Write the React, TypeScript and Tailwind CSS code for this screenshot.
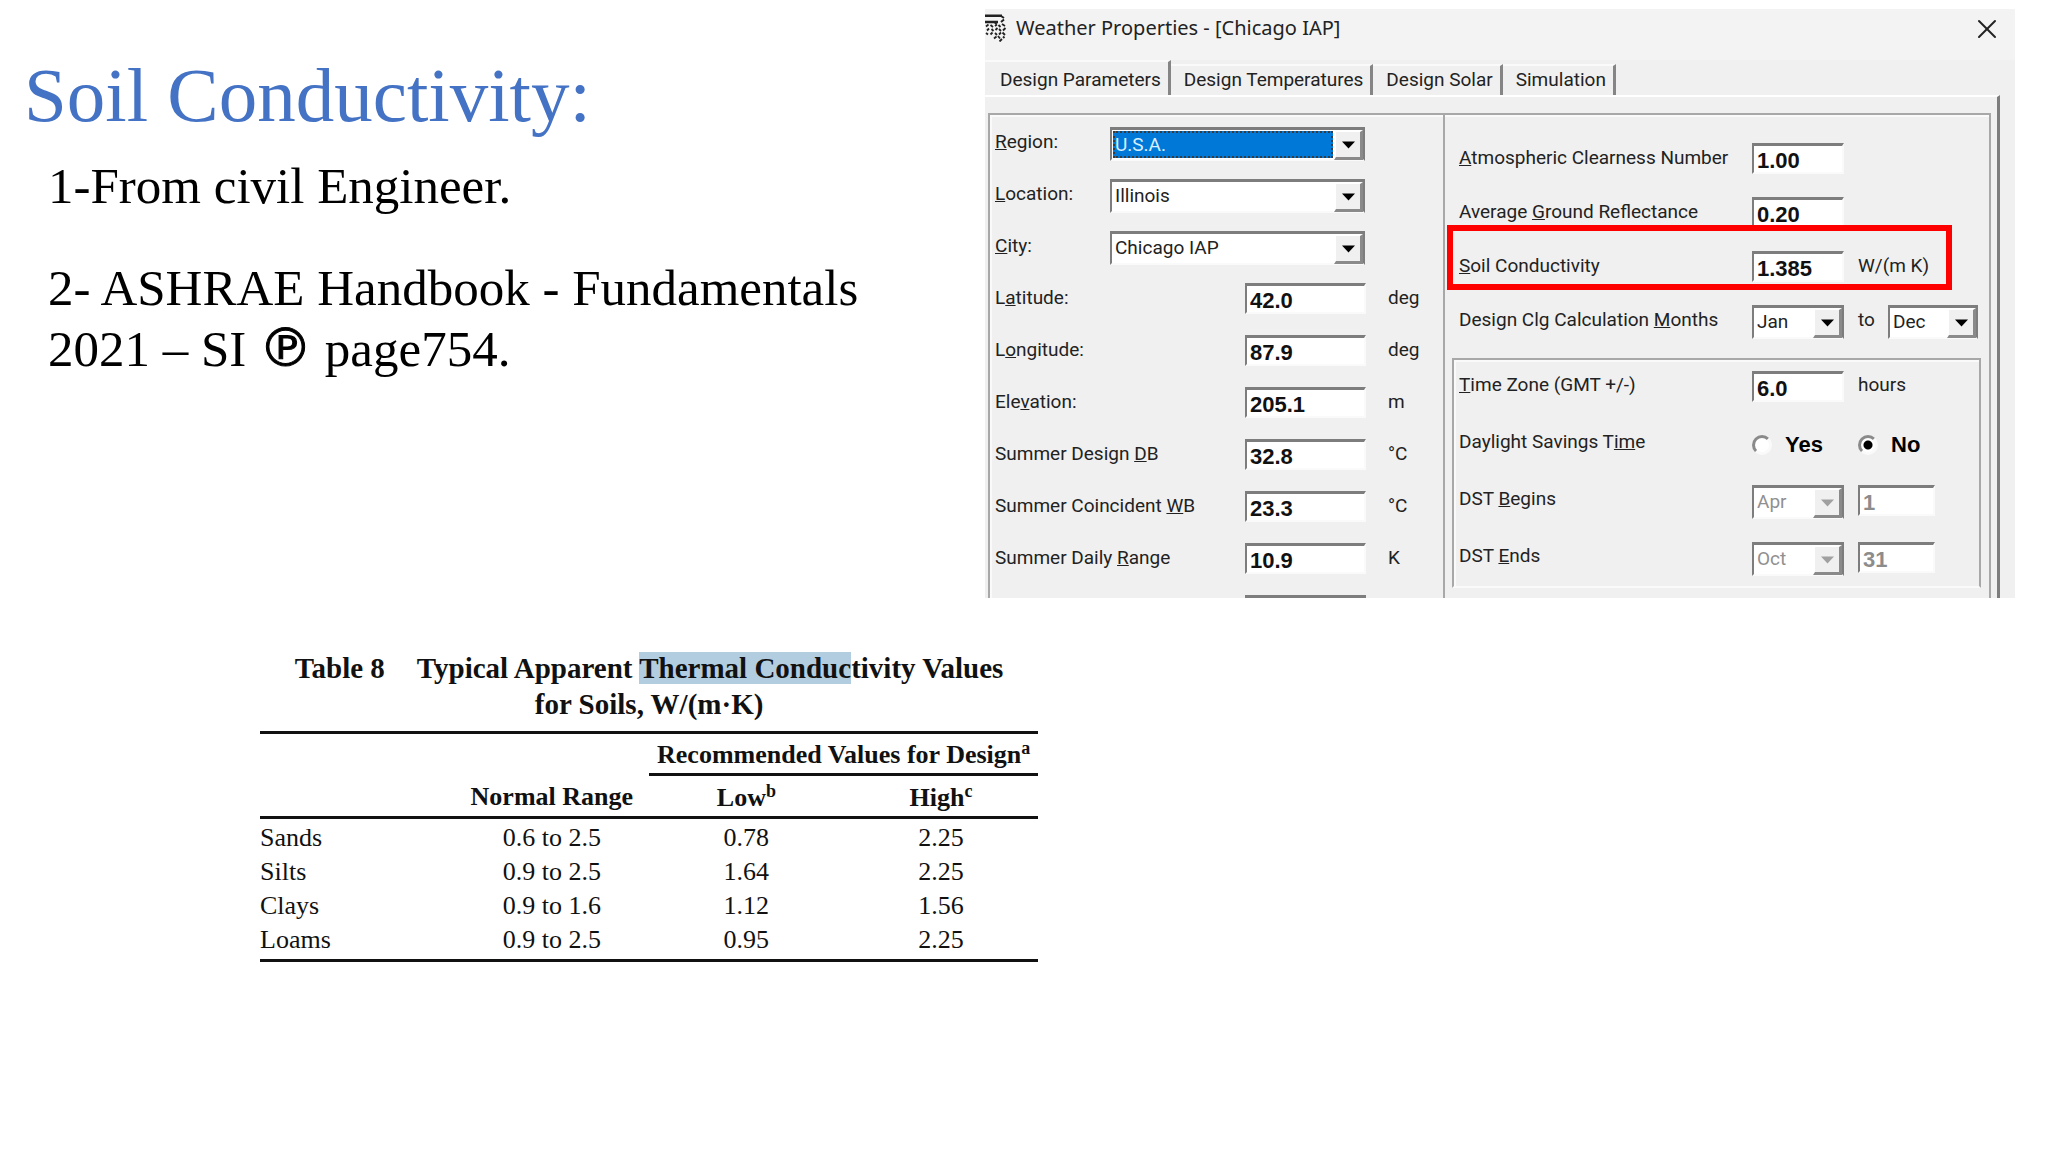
import { useState } from 'react';
import type { ReactNode } from 'react';
import { X } from 'lucide-react';

const leftInputs = [
  { id: 'latitude', label: <>L<u>a</u>titude:</>, value: '42.0', unit: 'deg' },
  { id: 'longitude', label: <>L<u>o</u>ngitude:</>, value: '87.9', unit: 'deg' },
  { id: 'elevation', label: <>Ele<u>v</u>ation:</>, value: '205.1', unit: 'm' },
  { id: 'summer-db', label: <>Summer Design <u>D</u>B</>, value: '32.8', unit: '°C' },
  { id: 'summer-wb', label: <>Summer Coincident <u>W</u>B</>, value: '23.3', unit: '°C' },
  { id: 'summer-range', label: <>Summer Daily <u>R</u>ange</>, value: '10.9', unit: 'K' },
];

const rightInputs = [
  { id: 'clearness', label: <><u>A</u>tmospheric Clearness Number</>, value: '1.00', unit: '' },
  { id: 'reflectance', label: <>Average <u>G</u>round Reflectance</>, value: '0.20', unit: '' },
  { id: 'soil', label: <><u>S</u>oil Conductivity</>, value: '1.385', unit: 'W/(m K)' },
];

const soils = [
  ['Sands', '0.6 to 2.5', '0.78', '2.25'],
  ['Silts', '0.9 to 2.5', '1.64', '2.25'],
  ['Clays', '0.9 to 1.6', '1.12', '1.56'],
  ['Loams', '0.9 to 2.5', '0.95', '2.25'],
];

const tabs = ['Design Parameters', 'Design Temperatures', 'Design Solar', 'Simulation'];

function NumberBox({ id, value, width, disabled, label }: {
  id: string; value: string; width: string; disabled?: boolean; label?: string;
}) {
  return (
    <input
      id={id}
      type="text"
      aria-label={label}
      defaultValue={value}
      disabled={disabled}
      className={`${width} h-[31px] shrink-0 border-2 border-t-[3px] border-t-[#7d7d7d] border-l-[#7d7d7d] border-r-[#fafafa] border-b-[#fafafa] bg-white pl-[3px] pt-[3px] font-['Liberation_Sans'] text-[22px] leading-6 font-bold text-[#111] outline-none disabled:text-[#8c8c8c]`}
    />
  );
}

function Dropdown({ id, options, width, active, disabled }: {
  id: string; options: string[]; width: string; active?: boolean; disabled?: boolean;
}) {
  return (
    <div className={`${width} relative h-[34px] shrink-0 border-2 border-t-[3px] border-t-[#7d7d7d] border-l-[#7d7d7d] border-r-[#7d7d7d] border-b-[#fafafa] bg-white ${active ? 'py-px pr-[30px] pl-px' : 'pr-[29px]'}`}>
      <select
        id={id}
        disabled={disabled}
        className={`block h-full w-full appearance-none leading-6 outline-none disabled:text-[#909090] disabled:opacity-100 ${active ? 'border-2 border-dotted border-[#3b3b3b] bg-[#0078d7] text-[#d8efff]' : 'bg-white pb-[2px] pl-[3px]'}`}
      >
        {options.map((o) => <option key={o}>{o}</option>)}
      </select>
      <span className="pointer-events-none absolute top-0 right-0 flex h-[30px] w-[29px] items-center justify-center border-t-2 border-r-[3px] border-b-[3px] border-l-2 border-t-white border-r-[#8a8a8a] border-b-[#8a8a8a] border-l-white bg-[#f0f0f0]">
        <svg width="13" height="8" viewBox="0 0 13 8" className={disabled ? 'fill-[#a0a0a0]' : 'fill-black'}>
          <path d="M0 0.5H13L6.5 7.5Z" />
        </svg>
      </span>
    </div>
  );
}

function Row({ children }: { children: ReactNode }) {
  return <div className="flex h-[34px] items-start whitespace-nowrap">{children}</div>;
}

function RainIcon() {
  return (
    <svg width="22" height="28" viewBox="0 0 22 28" fill="none" stroke="#222">
      <path strokeWidth="2.6" d="M0 1.8H17M0 8H13" />
      <path strokeWidth="2" d="M16 2L19 4M19 5.5L16 8M12 8L10 10" />
      <path strokeWidth="1.8" d="M1 12.5L3.5 10.5M5.5 11L8 13M10 12L12 10.5M13.5 11L15.5 13M17 10L20 12M2 16.5L4 14.5M6.5 15L8.5 17M10.5 16L12.5 14M14 15L16 17M18 16.5L20.5 14M1 19L3 20.5M5.5 20.5L7.5 18.5M10 19L12 21M14 20.5L16 18.5M17.5 18.5L20 21M9 24.5L11.5 22.5M13 22L15 24.5M14.5 27.5L17 25M18 22.5L19.5 24" />
    </svg>
  );
}

function WeatherWindow() {
  const [tab, setTab] = useState(tabs[0]);
  const [dst, setDst] = useState('No');

  return (
    <section className="overflow-hidden bg-[#f0f0f0] font-[Roboto,sans-serif] text-[19px] text-[#222]">
      <header className="flex h-[51px] items-start bg-[#f3f3f3] pt-[5px]">
        <RainIcon />
        <h2 className="ml-[9px] font-['Noto_Sans',sans-serif] text-[20px] leading-7">Weather Properties - [Chicago IAP]</h2>
        <button type="button" aria-label="Close" className="-mt-px mr-[12px] ml-auto">
          <X size={32} strokeWidth={2} absoluteStrokeWidth />
        </button>
      </header>

      <nav className="flex h-[35px] items-end">
        {tabs.map((t) => (
          <button
            key={t}
            type="button"
            onClick={() => setTab(t)}
            className={`border-t-2 border-r-[3px] border-t-[#fafafa] border-r-[#858585] pr-[7px] whitespace-nowrap ${t === tab ? 'h-[35px] pt-[3px] pl-[15px]' : 'h-[31px] pl-[13px]'}`}
          >
            {t}
          </button>
        ))}
      </nav>

      <div className="mr-[15px] border-t-2 border-r-[3px] border-t-white border-r-[#7d7d7d] pt-[16px] pr-[6px] pl-[3px]">
        <div className="flex border-x-2 border-t-2 border-[#a8a8a8] shadow-[inset_2px_2px_0_#fafafa]">
          <div className="w-[455px] shrink-0 border-r-2 border-[#a8a8a8] pt-[12px] pl-[5px]">
            <div className="flex flex-col gap-[18px]">
              <Row>
                <label htmlFor="region" className="w-[115px] leading-[30px]"><u>R</u>egion:</label>
                <Dropdown id="region" options={['U.S.A.']} width="w-[255px]" active />
              </Row>
              <Row>
                <label htmlFor="location" className="w-[115px] leading-[30px]"><u>L</u>ocation:</label>
                <Dropdown id="location" options={['Illinois']} width="w-[255px]" />
              </Row>
              <Row>
                <label htmlFor="city" className="w-[115px] leading-[30px]"><u>C</u>ity:</label>
                <Dropdown id="city" options={['Chicago IAP']} width="w-[255px]" />
              </Row>
              {leftInputs.map((f) => (
                <Row key={f.id}>
                  <label htmlFor={f.id} className="w-[250px] leading-[30px]">{f.label}</label>
                  <NumberBox id={f.id} value={f.value} width="w-[121px]" />
                  <span className="ml-[22px] leading-[30px]">{f.unit}</span>
                </Row>
              ))}
              {/* next field is cut off by the lower edge of the window */}
              <div className="ml-[250px] h-[3px] w-[121px] border-t-[3px] border-l-2 border-[#7d7d7d]" />
            </div>
          </div>

          <div className="min-w-0 flex-1 pt-[28px] pr-[8px] pl-[7px]">
            <div className="relative flex flex-col gap-[20px] pb-[19px] pl-[7px]">
              {rightInputs.map((f) => (
                <Row key={f.id}>
                  <label htmlFor={f.id} className="w-[293px] leading-[30px]">{f.label}</label>
                  <NumberBox id={f.id} value={f.value} width="w-[92px]" />
                  <span className="ml-[14px] leading-[30px]">{f.unit}</span>
                </Row>
              ))}
              <Row>
                <label htmlFor="month-from" className="w-[293px] leading-[30px]">Design Clg Calculation <u>M</u>onths</label>
                <Dropdown id="month-from" options={['Jan']} width="w-[92px]" />
                <label htmlFor="month-to" className="w-[44px] pl-[14px] leading-[30px]">to</label>
                <Dropdown id="month-to" options={['Dec']} width="w-[90px]" />
              </Row>
              <div className="pointer-events-none absolute top-[82px] right-[29px] -left-[5px] h-[65px] border-[6px] border-[#fe0000]" />
            </div>

            <div className="flex flex-col gap-[23px] border-2 border-[#a8a8a8] border-b-[#fafafa] pt-[11px] pb-[10px] pl-[5px] shadow-[inset_2px_2px_0_#fafafa]">
              <Row>
                <label htmlFor="timezone" className="w-[293px] leading-7"><u>T</u>ime Zone (GMT +/-)</label>
                <NumberBox id="timezone" value="6.0" width="w-[92px]" />
                <span className="ml-[14px] leading-7">hours</span>
              </Row>
              <Row>
                <span className="w-[293px] leading-7">Daylight Savings T<u>im</u>e</span>
                {['Yes', 'No'].map((v) => (
                  <label key={v} className="flex w-[106px] items-center gap-[13px] font-['Liberation_Sans'] text-[22px] leading-[34px] font-bold text-black">
                    <input
                      type="radio"
                      name="dst"
                      checked={dst === v}
                      onChange={() => setDst(v)}
                      className="size-[20px] appearance-none rounded-full border-[3px] border-t-[#8a8a8a] border-r-[#fafafa] border-b-[#fafafa] border-l-[#8a8a8a] bg-white checked:bg-[radial-gradient(circle,#000_4px,#fff_5px)]"
                    />
                    {v}
                  </label>
                ))}
              </Row>
              <Row>
                <label htmlFor="dst-begin" className="w-[293px] leading-7">DST <u>B</u>egins</label>
                <Dropdown id="dst-begin" options={['Apr']} width="w-[92px]" disabled />
                <span className="w-[14px]" />
                <NumberBox id="dst-begin-day" label="DST begin day" value="1" width="w-[77px]" disabled />
              </Row>
              <Row>
                <label htmlFor="dst-end" className="w-[293px] leading-7">DST <u>E</u>nds</label>
                <Dropdown id="dst-end" options={['Oct']} width="w-[92px]" disabled />
                <span className="w-[14px]" />
                <NumberBox id="dst-end-day" label="DST end day" value="31" width="w-[77px]" disabled />
              </Row>
            </div>
          </div>
        </div>
      </div>
    </section>
  );
}

function SoilTable() {
  return (
    <table className="w-full table-fixed border-b-[3px] border-[#111] text-center text-[26px] leading-[34px] text-[#111]">
      <caption className="pb-[9px] text-[29px] leading-[36px] font-bold whitespace-nowrap">
        Table 8<span className="inline-block w-[32px]" />Typical Apparent{' '}
        <mark className="bg-[#b2cde0] text-inherit">Thermal Conduc</mark>tivity Values
        <br />
        for Soils, W/(m·K)
      </caption>
      <thead>
        <tr className="h-[42px] border-t-[3px] border-[#111]">
          <td colSpan={2} />
          <th colSpan={2} className="border-b-[3px] border-[#111] pt-[2px] whitespace-nowrap">
            Recommended Values for Design<sup className="text-[18px] leading-none">a</sup>
          </th>
        </tr>
        <tr className="h-[43px] border-b-[3px] border-[#111]">
          <td />
          <th className="pt-[4px] whitespace-nowrap">Normal Range</th>
          <th className="pt-[4px]">Low<sup className="text-[18px] leading-none">b</sup></th>
          <th className="pt-[4px]">High<sup className="text-[18px] leading-none">c</sup></th>
        </tr>
      </thead>
      <tbody className="[&>tr:first-child>*]:pt-[2px] [&>tr:last-child>*]:pb-[2px]">
        {soils.map(([name, range, low, high]) => (
          <tr key={name}>
            <th scope="row" className="text-left font-normal">{name}</th>
            <td>{range}</td>
            <td>{low}</td>
            <td>{high}</td>
          </tr>
        ))}
      </tbody>
    </table>
  );
}

export default function App() {
  return (
    <main className="min-h-screen bg-white font-['Liberation_Serif',serif] text-black">
      <div className="grid grid-cols-[985fr_1030fr] pt-[9px] pr-[33px]">
        <div className="pt-[46px] pl-[48px]">
          <h1 className="-ml-[24px] text-[77px] leading-[80px] text-[#4472c4]">Soil Conductivity:</h1>
          <p className="mt-[21px] text-[51px] leading-[61px]">1-From civil Engineer.</p>
          <p className="mt-[41px] text-[51px] leading-[61px]">
            2- ASHRAE Handbook - Fundamentals
            <br />
            2021 – SI <span className="font-['DejaVu_Sans'] text-[53px] leading-none [-webkit-text-stroke:1px_black]">℗</span> page754.
          </p>
        </div>
        <WeatherWindow />
      </div>

      <div className="mt-[52px] ml-[260px] w-[38%]">
        <SoilTable />
      </div>
    </main>
  );
}
